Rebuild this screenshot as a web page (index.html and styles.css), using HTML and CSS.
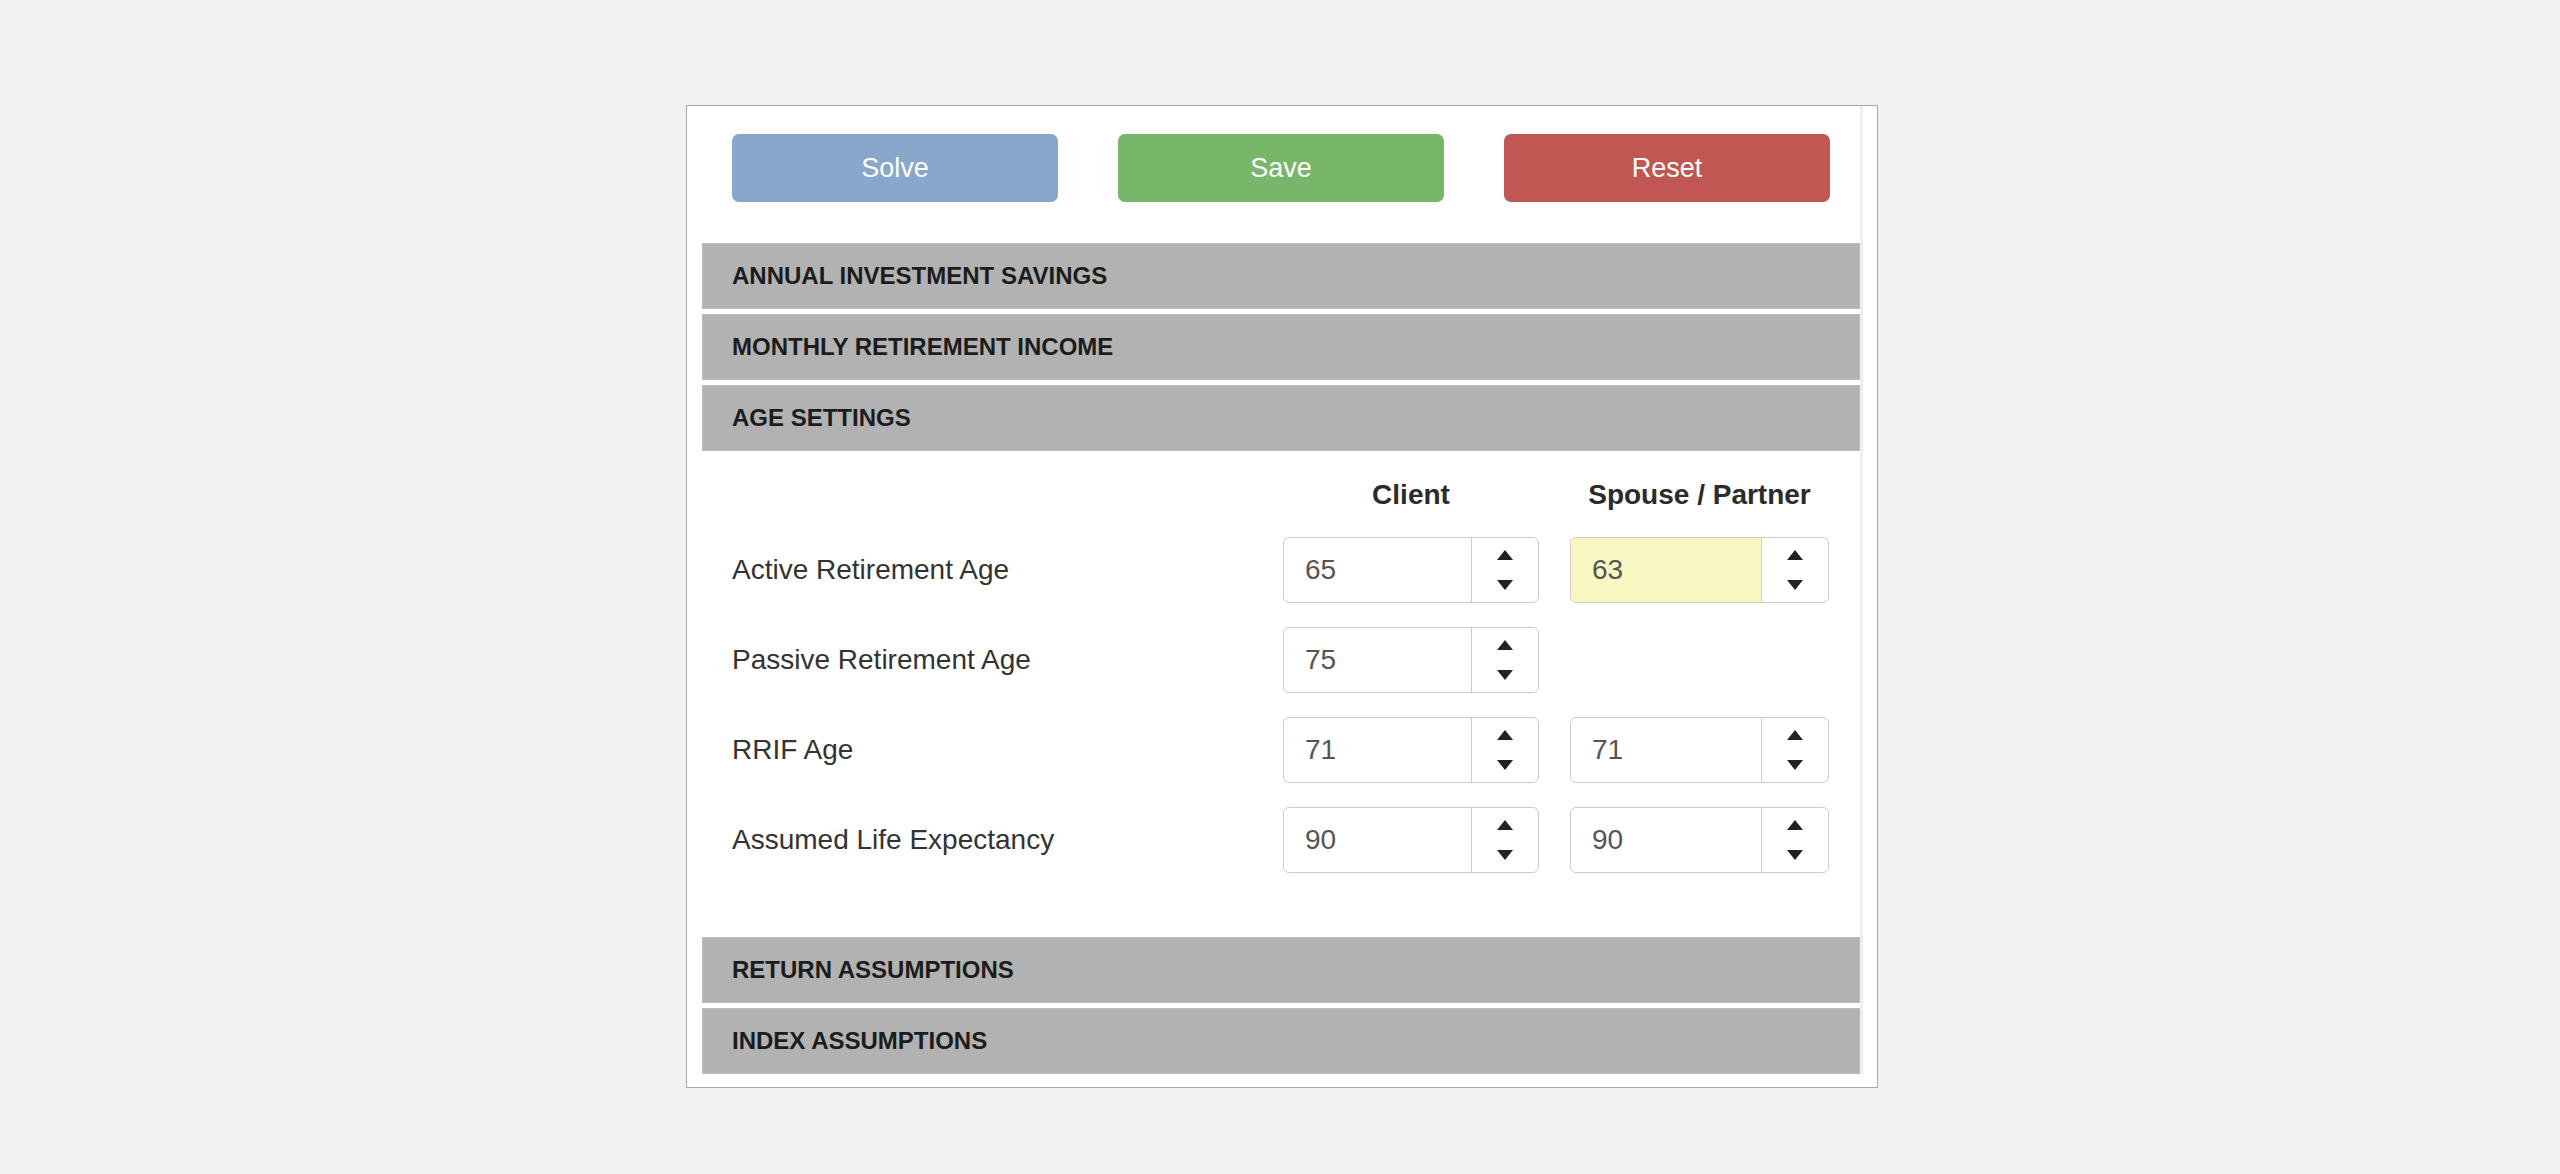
FILE: index.html
```html
<!DOCTYPE html>
<html lang="en">
<head>
<meta charset="utf-8">
<title>Age Settings</title>
<link rel="stylesheet" href="styles.css">
</head>
<body>
<div class="panel">
  <div class="content">
    <div class="actions">
      <button class="btn btn-solve">Solve</button>
      <button class="btn btn-save">Save</button>
      <button class="btn btn-reset">Reset</button>
    </div>

    <div class="section-head">ANNUAL INVESTMENT SAVINGS</div>
    <div class="section-head">MONTHLY RETIREMENT INCOME</div>
    <div class="section-head section-head-open">AGE SETTINGS</div>

    <div class="section-body">
      <div class="grid">
        <div class="col-title-spacer"></div>
        <div class="col-title">Client</div>
        <div class="col-title">Spouse / Partner</div>

        <div class="label">Active Retirement Age</div>
        <div class="spin"><span class="val">65</span><span class="arrows"><svg class="tri" viewBox="0 0 16 10"><polygon points="8,0 16,10 0,10"/></svg><svg class="tri" viewBox="0 0 16 10"><polygon points="0,0 16,0 8,10"/></svg></span></div>
        <div class="spin"><span class="val val-changed">63</span><span class="arrows"><svg class="tri" viewBox="0 0 16 10"><polygon points="8,0 16,10 0,10"/></svg><svg class="tri" viewBox="0 0 16 10"><polygon points="0,0 16,0 8,10"/></svg></span></div>

        <div class="label">Passive Retirement Age</div>
        <div class="spin"><span class="val">75</span><span class="arrows"><svg class="tri" viewBox="0 0 16 10"><polygon points="8,0 16,10 0,10"/></svg><svg class="tri" viewBox="0 0 16 10"><polygon points="0,0 16,0 8,10"/></svg></span></div>
        <div class="empty"></div>

        <div class="label">RRIF Age</div>
        <div class="spin"><span class="val">71</span><span class="arrows"><svg class="tri" viewBox="0 0 16 10"><polygon points="8,0 16,10 0,10"/></svg><svg class="tri" viewBox="0 0 16 10"><polygon points="0,0 16,0 8,10"/></svg></span></div>
        <div class="spin"><span class="val">71</span><span class="arrows"><svg class="tri" viewBox="0 0 16 10"><polygon points="8,0 16,10 0,10"/></svg><svg class="tri" viewBox="0 0 16 10"><polygon points="0,0 16,0 8,10"/></svg></span></div>

        <div class="label">Assumed Life Expectancy</div>
        <div class="spin"><span class="val">90</span><span class="arrows"><svg class="tri" viewBox="0 0 16 10"><polygon points="8,0 16,10 0,10"/></svg><svg class="tri" viewBox="0 0 16 10"><polygon points="0,0 16,0 8,10"/></svg></span></div>
        <div class="spin"><span class="val">90</span><span class="arrows"><svg class="tri" viewBox="0 0 16 10"><polygon points="8,0 16,10 0,10"/></svg><svg class="tri" viewBox="0 0 16 10"><polygon points="0,0 16,0 8,10"/></svg></span></div>
      </div>
    </div>

    <div class="section-head">RETURN ASSUMPTIONS</div>
    <div class="section-head section-head-last">INDEX ASSUMPTIONS</div>
  </div>
</div>
</body>
</html>
```

FILE: styles.css
```css
html, body {
  margin: 0;
  padding: 0;
  background: #f2f2f2;
  font-family: "Liberation Sans", Arial, sans-serif;
}

.panel {
  box-sizing: border-box;
  width: 1192px;
  margin: 105px 0 0 686px;
  background: #ffffff;
  border: 1px solid #a9a9a9;
  padding: 0 14px 13px 15px;
}

.content {
  border-right: 3px solid #efefef;
  padding-top: 28px;
}

.actions {
  display: grid;
  grid-template-columns: 1fr 1fr 1fr;
  column-gap: 60px;
  padding: 0 30px;
  margin-bottom: 41px;
}

.btn {
  height: 68px;
  border: none;
  border-radius: 7px;
  color: #ffffff;
  font-family: "Liberation Sans", Arial, sans-serif;
  font-size: 27px;
  padding: 0;
  cursor: pointer;
}

.btn-solve { background: #88a7ca; }
.btn-save { background: #78b769; }
.btn-reset { background: #c05753; }

.section-head {
  box-sizing: border-box;
  height: 66px;
  margin-bottom: 5px;
  background: #b2b2b2;
  border: 1px solid #bdbdbd;
  padding-left: 29px;
  display: flex;
  align-items: center;
  color: #1c1c1c;
  font-weight: bold;
  font-size: 24px;
}

.section-head-open,
.section-head-last {
  margin-bottom: 0;
}

.section-body {
  padding: 28px 31px 64px 30px;
}

.grid {
  display: grid;
  grid-template-columns: 1fr 256px 259px;
  column-gap: 31px;
  row-gap: 24px;
  align-items: center;
}

.col-title {
  text-align: center;
  font-weight: bold;
  font-size: 28px;
  line-height: 32px;
  color: #2b2b2b;
  margin-bottom: 2px;
}

.label {
  font-size: 28px;
  color: #333333;
}

.spin {
  box-sizing: border-box;
  height: 66px;
  display: flex;
  border: 1px solid #cccccc;
  border-radius: 6px;
  overflow: hidden;
  background: #ffffff;
}

.val {
  flex: 1;
  display: flex;
  align-items: center;
  padding-left: 21px;
  font-size: 28px;
  color: #555555;
}

.val-changed {
  background: #f9f7c1;
}

.arrows {
  box-sizing: border-box;
  width: 67px;
  border-left: 1px solid #cccccc;
  display: flex;
  flex-direction: column;
  align-items: center;
  padding-top: 12px;
  gap: 20px;
}

.tri {
  width: 16px;
  height: 10px;
  display: block;
  fill: #222222;
}
```
